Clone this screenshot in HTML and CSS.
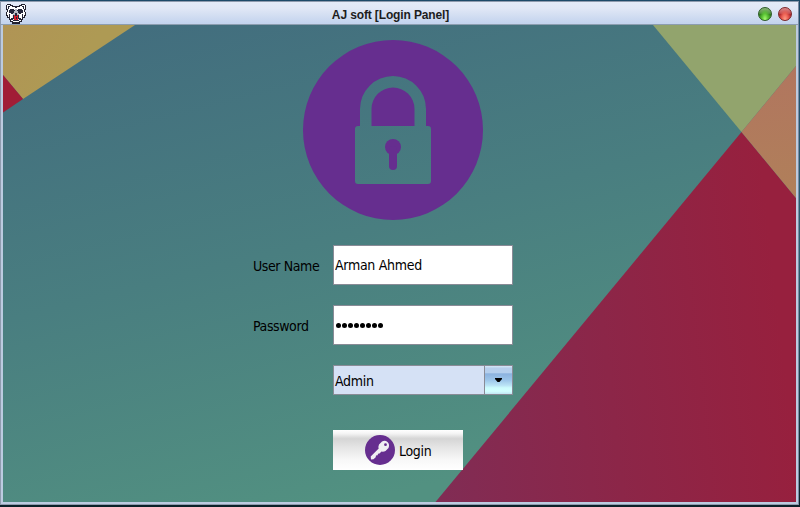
FILE: index.html
```
<!DOCTYPE html>
<html lang="en">
<head>
<meta charset="utf-8">
<title>AJ soft [Login Panel]</title>
<link rel="stylesheet" href="styles.css">
</head>
<body>
<div class="window">
  <header class="titlebar">
    <svg class="app-icon" viewBox="0 0 20 20" shape-rendering="crispEdges">
      <path fill="#20202e" d="M1 0h4v1h2v1h6V1h2V0h4v1h1v5h-1v2h1v4h-1v2h-2v2h-1v2h-2v2H6v-2H4v-2H3v-2H1v-2H0V8h1V6H0V1h1z"/>
      <path fill="#fff" d="M1 1h3v1h2v1h8V2h2V1h3v4h-1v3h1v3h-1v2h-2v2h-1v2h-2v1H7v-1H5v-2H4v-2H2v-2H1V8h1V5H1z"/>
      <path fill="#24263a" d="M2 2h2v1H3v2H2zM16 2h2v3h-1V3h-1zM4 5h4v1h1v3H8v1H5V9H3V6h1zM12 5h4v1h1v3h-2v1h-3V9h-1V6h1zM3 10h1v4H3zM16 10h1v4h-1zM7 10h6v1h1v5h-1v1H7v-1H6v-5h1zM5 14h1v2H5zM14 14h1v2h-1zM8 18h1v1H8zM11 18h1v1h-1zM9 3h2v1H9z"/>
      <path fill="#b8bac4" d="M9 5h2v2h1v2h1v2H7V9h1V7h1z"/>
      <path fill="#e9eaf0" d="M6 11h1v3H6zM13 11h1v3h-1zM7 15h1v1H7zM12 15h1v1h-1z"/>
      <path fill="#d51f2c" d="M8 11h1v1h2v-1h1v5H8z"/>
      <path fill="#24263a" d="M9 9h2v2H9zM10 13h1v2h-1z"/>
    </svg>
    <h1 class="caption">AJ soft [Login Panel]</h1>
    <div class="controls">
      <span class="orb orb-green"></span>
      <span class="orb orb-red"></span>
    </div>
  </header>
  <main class="content">
    <svg class="backdrop" viewBox="3 25 793 477" preserveAspectRatio="none">
      <defs>
        <linearGradient id="teal" gradientUnits="userSpaceOnUse" x1="200" y1="0" x2="330" y2="510">
          <stop offset="0" stop-color="#426d7e"/><stop offset=".5" stop-color="#497e80"/><stop offset="1" stop-color="#529181"/>
        </linearGradient>
        <linearGradient id="crimson" gradientUnits="userSpaceOnUse" x1="445" y1="500" x2="796" y2="460">
          <stop offset="0" stop-color="#812c54"/><stop offset=".5" stop-color="#8c2648"/><stop offset="1" stop-color="#97203e"/>
        </linearGradient>
        <linearGradient id="gold" gradientUnits="userSpaceOnUse" x1="3" y1="25" x2="70" y2="75">
          <stop offset="0" stop-color="#b09455"/><stop offset="1" stop-color="#ae9a54"/>
        </linearGradient>
        <linearGradient id="clay" gradientUnits="userSpaceOnUse" x1="780" y1="70" x2="790" y2="190">
          <stop offset="0" stop-color="#b1765f"/><stop offset="1" stop-color="#b07f5a"/>
        </linearGradient>
      </defs>
      <path fill="url(#teal)" d="M3 25h793v477H3z"/>
      <path fill="url(#gold)" d="M3 25h132L23 99 3 75z"/>
      <path fill="#a11d36" d="M3 75l20 24-20 13.500z"/>
      <path fill="url(#crimson)" d="M741.500 132L796 198v304H435.500z"/>
      <path fill="#92a46d" d="M653 25h143v41l-54.500 66z"/>
      <path fill="url(#clay)" d="M796 66v132l-54.500-66z"/>
    </svg>
    <svg class="padlock" viewBox="0 0 180 180">
      <path fill="#662e8f" fill-rule="evenodd" d="M90 0a90 90 0 1 1 0 180A90 90 0 0 1 90 0zM57 86h-2q-3 0-3 3v52q0 3 3 3h70q3 0 3-3V89q0-3-3-3h-2V69a33 33 0 0 0-66 0zM68.500 86V69a21.500 21.500 0 0 1 43 0v17z"/>
      <circle cx="90" cy="107" r="8" fill="#662e8f"/>
      <path stroke="#662e8f" stroke-width="8" stroke-linecap="round" d="M90 110v16"/>
    </svg>
    <form class="form">
      <label class="label" for="user">User Name</label>
      <input class="field" id="user" type="text" value="Arman Ahmed">
      <label class="label" for="pass">Password</label>
      <div class="field dots" id="pass"><i></i><i></i><i></i><i></i><i></i><i></i><i></i><i></i></div>
      <div class="combo">
        <span class="combo-value">Admin</span>
        <span class="combo-arrow"><svg width="7" height="4" viewBox="0 0 7 4"><path d="M0 0h7v1L4.500 4h-2L0 1z"/></svg></span>
      </div>
      <button class="login" type="button">
        <svg class="key" viewBox="0 0 30 30">
          <circle cx="15" cy="15" r="15" fill="#662e8f"/>
          <path fill="#f0eef2" fill-rule="evenodd" d="M14 9.500L17 6.500q3-1.500 5.500.5 2.500 2.500 1 6l-3 3q-2 1-4 .5l-2 2-1.500.2-.3 1.600-1.700.3-.3 1.700-2.200 1.900L6 24.500l-.3-3 8-8q-.6-2 .3-4zM20.500 8.300a1.400 1.400 0 1 0 0 2.800 1.400 1.400 0 0 0 0-2.800z"/>
        </svg>
        <span class="login-text">Login</span>
      </button>
    </form>
  </main>
</div>
</body>
</html>
```
FILE: styles.css
```
* { box-sizing: border-box; }

body {
  margin: 0;
  height: 507px;
  overflow: hidden;
  padding: 1px 1px 2px 0;
  background: linear-gradient(#1d4a68, #2a5f72 50%, #0b2028);
  font: 14px "DejaVu Sans Condensed", "DejaVu Sans", sans-serif;
  letter-spacing: -0.3px;
  color: #000;
}

.window {
  height: 504px;
  border: 1px solid #8f9bae;
  border-right-color: #7a8aa2;
  padding: 0 2px 2px;
  background: #bccbe0;
}

.titlebar {
  display: flex;
  align-items: center;
  height: 23px;
  margin: 0 -2px;
  padding: 0 5px;
  background: linear-gradient(#e4ebf8 0, #e0e7f6 30%, #c4d4ee 95%);
  border-bottom: 1px solid #8c9db0;
}

.app-icon { width: 20px; height: 20px; margin-top: 1px; }

.caption {
  flex: 1;
  margin: 3px 3px 0 0;
  text-align: center;
  font: bold 12px "Liberation Sans", sans-serif;
  letter-spacing: -0.13px;
  color: #1d1d1d;
}

.controls { display: flex; gap: 6px; margin: 1px 1px 0 0; }

.orb {
  width: 14px;
  height: 14px;
  border-radius: 50%;
}

.orb-green {
  border: 1px solid #2c5a26;
  background: radial-gradient(ellipse at 50% 95%, #a8ff72 0, #5cc436 35%, transparent 65%), linear-gradient(#8bb578, #559443 45%, #2f7d1c 50%, #4dad2b);
}

.orb-red {
  border: 1px solid #7b2629;
  background: radial-gradient(ellipse at 50% 95%, #ff9e88 0, #ed6255 35%, transparent 65%), linear-gradient(#da8b8c, #c44f52 45%, #b0272c 50%, #d94645);
}

.content {
  position: relative;
  height: 477px;
  padding: 15px 0 0 250px;
}

.backdrop {
  position: absolute;
  inset: 0;
  width: 100%;
  height: 100%;
}

.padlock {
  position: relative;
  display: block;
  width: 180px;
  height: 180px;
  margin-left: 50px;
}

.form {
  position: relative;
  display: grid;
  grid-template-columns: 80px 180px;
  grid-template-rows: 40px 40px 30px 40px;
  row-gap: 20px;
  margin-top: 25px;
}

.label { line-height: 42px; letter-spacing: -0.4px; }

.field {
  width: 180px;
  height: 40px;
  margin: 0;
  padding: 0 1px;
  border: 1px solid #898b96;
  border-radius: 0;
  background: #fff;
  font: inherit;
  letter-spacing: inherit;
  color: #000;
  outline: 0;
}

.dots { display: flex; align-items: center; gap: 1px; padding-left: 1.5px; }
.dots i { width: 5px; height: 5px; border-radius: 50%; background: #000; }

.combo {
  grid-column: 2;
  display: flex;
  border: 1px solid #898b96;
  background: #d5e1f5;
}

.combo-value { flex: 1; padding-left: 1px; line-height: 30px; }

.combo-arrow {
  display: flex;
  align-items: center;
  justify-content: center;
  width: 28px;
  border-left: 1px solid #898b96;
  background: linear-gradient(#d5e7f7 0, #b7cfed 8%, #b4cfed 24%, #8cb2df 28%, #9cc5e9 50%, #bce5f6 70%, #cdfcfd 78%, #d2ffff 90%, #c1e6f3);
}

.login {
  grid-column: 2;
  display: flex;
  align-items: center;
  width: 130px;
  height: 40px;
  margin-top: 15px;
  padding: 0 0 0 32px;
  gap: 4px;
  border: 0;
  background: linear-gradient(#fff 0, #f4f4f4 9%, #ddd 18%, #d5d5d5 22%, #e6e6e6 45%, #f8f8f8 75%, #fff);
  font: inherit;
  letter-spacing: inherit;
  color: #000;
}

.key { width: 30px; height: 30px; }
.login-text { padding-top: 2px; }
```
